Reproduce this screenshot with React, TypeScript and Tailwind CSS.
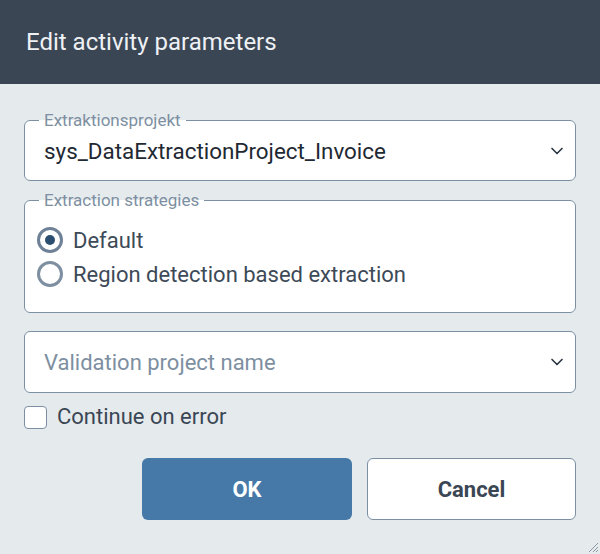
import { ChevronDown } from 'lucide-react';

export default function App() {
  return (
    <div className="w-[600px] h-[554px] flex flex-col bg-[#e5eaed] relative overflow-hidden" style={{ fontFamily: 'Roboto, "Liberation Sans", sans-serif' }}>
      {/* Header */}
      <div className="h-[84px] bg-[#3a4654] flex items-center pl-[26px] flex-shrink-0">
        <h1 className="text-[24px] text-[#eef1f4] leading-none">Edit activity parameters</h1>
      </div>

      <div className="flex flex-col px-6 pt-[26px]">
        {/* Extraktionsprojekt */}
        <fieldset className="rounded-md border border-[#7c8fa3] bg-white pl-[14px] pr-2 m-0">
          <legend className="px-[5px] text-[17px] leading-[20px] text-[#7d8fa1]">Extraktionsprojekt</legend>
          <div className="flex items-center justify-between pl-[5px] pt-[8px] pb-[16px]">
            <span className="text-[22.4px] leading-[26px] text-[#1f2933]">sys_DataExtractionProject_Invoice</span>
            <ChevronDown size={20} strokeWidth={2} className="text-[#2b3744]" />
          </div>
        </fieldset>

        {/* Extraction strategies */}
        <fieldset className="mt-[9px] rounded-md border border-[#7c8fa3] bg-white pl-[14px] pr-3 m-0">
          <legend className="px-[5px] text-[17px] leading-[20px] text-[#7d8fa1]">Extraction strategies</legend>
          <div className="flex flex-col pt-[13px] pb-[21px] -ml-[2px]">
            <label className="h-[34px] flex items-center gap-[10px]">
              <span className="w-[26px] h-[26px] rounded-full border-[3px] border-[#6f8196] flex items-center justify-center">
                <span className="w-[10px] h-[10px] rounded-full bg-[#2c4e70]" />
              </span>
              <span className="text-[22px] text-[#3d4a57]">Default</span>
            </label>
            <label className="h-[34px] flex items-center gap-[10px]">
              <span className="w-[26px] h-[26px] rounded-full border-[3px] border-[#7d8fa1]" />
              <span className="text-[22px] text-[#3d4a57]">Region detection based extraction</span>
            </label>
          </div>
        </fieldset>

        {/* Validation project */}
        <div className="mt-[18px] h-[62px] rounded-md border border-[#7c8fa3] bg-white flex items-center justify-between pl-[19px] pr-2">
          <span className="text-[22px] text-[#7d8fa1]">Validation project name</span>
          <ChevronDown size={20} strokeWidth={2} className="text-[#2b3744]" />
        </div>

        {/* Continue on error */}
        <label className="mt-[12px] flex items-center gap-[10px] h-[24px] leading-[24px]">
          <span className="w-[23px] h-[23px] rounded-[4px] border border-[#7c8fa3] bg-white" />
          <span className="text-[22px] text-[#3a4654]">Continue on error</span>
        </label>

        {/* Buttons */}
        <div className="mt-[29px] flex justify-end gap-[15px]">
          <button className="w-[210px] h-[62px] rounded-md bg-[#4679a8] text-white text-[22px] font-bold">OK</button>
          <button className="w-[209px] h-[62px] rounded-md bg-white border border-[#7c8fa3] text-[#3a4654] text-[22px] font-bold">Cancel</button>
        </div>
      </div>

      {/* Resize handle */}
      <svg className="absolute right-[1px] bottom-[1px]" width="12" height="12" viewBox="0 0 12 12">
        <path d="M11 2 L2 11 M11 6 L6 11 M11 9 L9 11" stroke="#8a97a4" strokeWidth="1" />
      </svg>
    </div>
  );
}
